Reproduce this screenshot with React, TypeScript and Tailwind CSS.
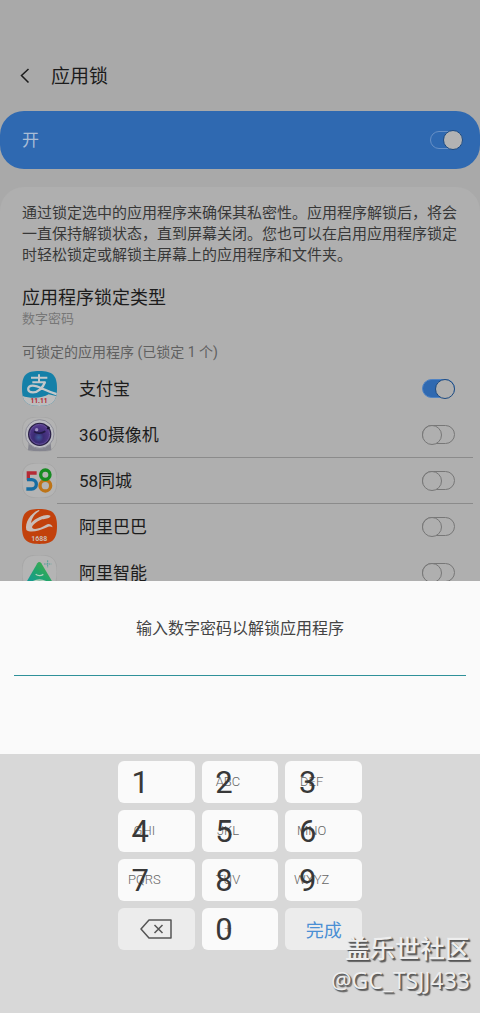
import { useState } from "react";
import type { ReactNode } from "react";

const SQUIRCLE = "M52 0C92 0 105 13 105 52S92 105 52 105 0 92 0 52 12 0 52 0Z";

function AlipayIcon() {
  return (
    <svg viewBox="0 0 105 105" className="size-[35px] shrink-0" aria-hidden="true">
      <clipPath id="alipay">
        <path d={SQUIRCLE} />
      </clipPath>
      <g clipPath="url(#alipay)">
        <rect width="105" height="105" fill="#1580a8" />
        <path d="M0 74C25 84 62 82 80 70L105 76V105H0Z" fill="#bdbdbd" />
        <g fill="none" stroke="#c4c8ca" strokeWidth="6">
          <path d="M27 20H76M51 10V34M31 34H71" />
          <path d="M69 33C63 50 48 64 33 64C14 64 14 44 32 44C50 44 66 58 105 70" strokeWidth="7" />
        </g>
        <text x="51" y="97" textAnchor="middle" fontSize="20" fontWeight="700" fill="#b3212d" fontFamily="Roboto, sans-serif">
          11.11
        </text>
      </g>
    </svg>
  );
}

function CameraIcon() {
  return (
    <svg viewBox="0 0 105 105" className="size-[35px] shrink-0" aria-hidden="true">
      <defs>
        <radialGradient id="lens" cx="45%" cy="65%" r="60%">
          <stop offset="0" stopColor="#3f5c9a" />
          <stop offset="0.4" stopColor="#3b2c74" />
          <stop offset="1" stopColor="#54398c" />
        </radialGradient>
      </defs>
      <path d={SQUIRCLE} fill="#b3b3b3" stroke="#a2a2a2" strokeWidth="2" />
      <path d="M20 78L18 100Q52 106 88 100L86 78Z" fill="#85858f" />
      <circle cx="53" cy="51" r="43" fill="#bcbcc2" stroke="#8d8d98" strokeWidth="3" />
      <circle cx="53" cy="52" r="35" fill="#2a2048" />
      <circle cx="53" cy="52" r="30" fill="url(#lens)" stroke="#66529c" strokeWidth="3" />
      <path d="M36 44Q52 54 70 43" fill="none" stroke="#221a44" strokeWidth="5" />
      <circle cx="44" cy="38" r="5" fill="#9b8fc0" />
      <path d="M76 36L82 30" stroke="#191430" strokeWidth="6" />
    </svg>
  );
}

function CityIcon() {
  return (
    <svg viewBox="0 0 105 105" className="size-[35px] shrink-0" aria-hidden="true">
      <path d={SQUIRCLE} fill="#b4b4b4" stroke="#a2a2a2" strokeWidth="2" />
      <g fill="none" strokeWidth="10">
        <path d="M44 30H19V52" stroke="#b52a35" />
        <path d="M15 50H29A14 14 0 0 1 29 78H13" stroke="#156da3" />
        <circle cx="70" cy="68" r="16" stroke="#bd7417" />
        <circle cx="70" cy="35" r="14" stroke="#168b22" />
      </g>
    </svg>
  );
}

function AlibabaIcon() {
  return (
    <svg viewBox="0 0 105 105" className="size-[35px] shrink-0" aria-hidden="true">
      <path d={SQUIRCLE} fill="#c2410c" />
      <path
        d="M50 3C24 14 8 42 13 63C24 72 51 66 70 57C78 53 85 50 92 55C89 46 80 43 73 47C59 56 38 64 31 57C27 51 43 38 60 31C71 26 82 27 86 21C79 15 65 19 53 24C43 28 34 35 27 42C30 26 38 14 53 5Z"
        fill="#c9bdb8"
      />
      <path d="M48 29C62 20 80 18 84 24C78 30 72 28 65 31Z" fill="#c9bdb8" />
      <text x="52" y="95" textAnchor="middle" fontSize="21" fontWeight="700" fill="#cabbb4" fontFamily="Roboto, sans-serif">
        1688
      </text>
    </svg>
  );
}

function SmartIcon() {
  return (
    <svg viewBox="0 0 105 105" className="size-[35px] shrink-0" aria-hidden="true">
      <defs>
        <linearGradient id="smart" x1="0" y1="1" x2="1" y2="0">
          <stop offset="0" stopColor="#1196a0" />
          <stop offset="0.5" stopColor="#21a56b" />
          <stop offset="1" stopColor="#52ac40" />
        </linearGradient>
      </defs>
      <path d={SQUIRCLE} fill="#b4b4b4" stroke="#a2a2a2" strokeWidth="2" />
      <path d="M46 25Q52 17 58 25L91 80Q94 90 84 90H20Q10 90 14 80Z" fill="url(#smart)" />
      <path d="M41 58Q52 66 64 58M33 80Q52 70 72 80" fill="none" stroke="#b6d0bd" strokeWidth="4" />
      <path d="M77 16V38M66 27H88" stroke="#55a09a" strokeWidth="3" strokeDasharray="5 2" />
    </svg>
  );
}

type LockApp = { name: string; icon: ReactNode; divider?: boolean };

const apps: LockApp[] = [
  { name: "支付宝", icon: <AlipayIcon /> },
  { name: "360摄像机", icon: <CameraIcon /> },
  { name: "58同城", icon: <CityIcon />, divider: true },
  { name: "阿里巴巴", icon: <AlibabaIcon />, divider: true },
  { name: "阿里智能", icon: <SmartIcon /> },
];

const keys = [
  { digit: "1", letters: "" },
  { digit: "2", letters: "ABC" },
  { digit: "3", letters: "DEF" },
  { digit: "4", letters: "GHI" },
  { digit: "5", letters: "JKL" },
  { digit: "6", letters: "MNO" },
  { digit: "7", letters: "PQRS" },
  { digit: "8", letters: "TUV" },
  { digit: "9", letters: "WXYZ" },
];

function DigitKey({ digit, letters, onPress }: { digit: string; letters: string; onPress: (d: string) => void }) {
  return (
    <button
      type="button"
      className="grid h-[42px] place-items-center rounded-md bg-[#fafafa]"
      onClick={() => onPress(digit)}
    >
      <span className="col-start-1 row-start-1 pr-6 text-[13px] font-light text-[#666666]">{letters}</span>
      <span className="col-start-1 row-start-1 pt-px pr-8 text-[31px] leading-10 text-[#383838]">{digit}</span>
    </button>
  );
}

function App() {
  const [enabled, setEnabled] = useState<boolean>(true);
  const [locked, setLocked] = useState<string[]>(["支付宝"]);
  const [code, setCode] = useState<string>("");

  const toggleApp = (name: string) => {
    setLocked(locked.includes(name) ? locked.filter((n) => n !== name) : [...locked, name]);
  };

  const press = (d: string) => {
    setCode(code + d);
  };

  return (
    <div className="relative flex h-screen flex-col overflow-hidden bg-[#a9a9a9] font-[Roboto,'Noto_Sans_CJK_SC',sans-serif] text-[#1c1c1c]">
      <main className="min-h-0 flex-1 overflow-hidden">
        <header className="flex h-24 items-center gap-[18px] pt-14 pl-[18px]">
          <button type="button" aria-label="返回">
            <svg viewBox="0 0 15 16" className="h-4 w-[15px]" fill="none" stroke="#1c1c1c" strokeWidth="1.5">
              <path d="M10.500 1L3.500 7.500L10.500 14.500" />
            </svg>
          </button>
          <h1 className="pt-0.5 text-[19px] leading-7">应用锁</h1>
        </header>

        <label className="mt-[15px] flex h-[58px] items-center justify-between rounded-[24px] bg-[#2f69b1] pr-[17px] pl-[22px] text-[17px] text-[#a9bdd6]">
          <span className="pt-0.5">开</span>
          <input
            type="checkbox"
            checked={enabled}
            onChange={() => setEnabled(!enabled)}
            className="flex h-[18px] w-[33px] appearance-none items-center rounded-full border border-[#6790c6] before:-mx-px before:size-5 before:shrink-0 before:rounded-full before:border before:border-[#1d4a80] before:bg-[#b3b3b3] checked:justify-end"
          />
        </label>

        <section className="mt-[18px] rounded-t-[24px] bg-[#afafaf] pt-4 pb-6">
          <p className="px-[22px] text-[15px] leading-[21px] text-[#383838]">
            通过锁定选中的应用程序来确保其私密性。应用程序解锁后，将会一直保持解锁状态，直到屏幕关闭。您也可以在启用应用程序锁定时轻松锁定或解锁主屏幕上的应用程序和文件夹。
          </p>
          <h2 className="mt-5 px-[22px] text-[18px] leading-6">应用程序锁定类型</h2>
          <p className="px-[22px] text-[13px] leading-[18px] text-[#777777]">数字密码</p>
          <h3 className="mt-[14px] px-[22px] text-[14px] leading-5 text-[#606060]">
            可锁定的应用程序 (已锁定 {locked.length} 个)
          </h3>
          <ul className="mt-[3px] pr-[7px] pl-[22px]">
            {apps.map((app) => (
              <li key={app.name}>
                <label className="flex h-[46px] items-center">
                  {app.icon}
                  <span
                    className={
                      app.divider
                        ? "flex h-full flex-1 items-center justify-between border-t border-[#8b8b8b] pr-[18px] pl-[22px] text-[17px]"
                        : "flex h-full flex-1 items-center justify-between border-t border-transparent pr-[18px] pl-[22px] text-[17px]"
                    }
                  >
                    <span className="pt-0.5">{app.name}</span>
                    <input
                      type="checkbox"
                      checked={locked.includes(app.name)}
                      onChange={() => toggleApp(app.name)}
                      className="flex h-[19px] w-[33px] appearance-none items-center rounded-full border border-[#777777] before:-mx-px before:size-5 before:shrink-0 before:rounded-full before:border before:border-[#777777] before:bg-[#afafaf] checked:justify-end checked:border-[#4f83c4] checked:bg-[#2f69b1] checked:before:border-[#1d4a80]"
                    />
                  </span>
                </label>
              </li>
            ))}
          </ul>
        </section>
      </main>

      <section className="bg-[#fafafa] px-[14px] pt-9 pb-[78px]">
        <label htmlFor="code" className="block text-center text-[16px] leading-6 text-[#444444]">
          输入数字密码以解锁应用程序
        </label>
        <input
          id="code"
          type="password"
          value={code}
          onChange={(e) => setCode(e.target.value)}
          className="block h-[35px] w-full border-b border-[#2f9199] text-center text-[19px] outline-none"
        />
      </section>

      <section className="bg-[#d8d8d8] pt-[7px] pb-[63px]">
        <div className="mx-auto grid w-[244px] grid-cols-3 gap-[7px]">
          {keys.map((k) => (
            <DigitKey key={k.digit} digit={k.digit} letters={k.letters} onPress={press} />
          ))}
          <button
            type="button"
            aria-label="删除"
            className="flex h-[42px] items-center justify-center rounded-md bg-[#ececec]"
            onClick={() => setCode(code.slice(0, -1))}
          >
            <svg viewBox="0 0 32 20" className="h-5 w-8" fill="none" stroke="#555555" strokeWidth="1.500">
              <path d="M9 1H31V19H9L1 10Z" strokeLinejoin="round" />
              <path d="M14.500 6L22.500 14M22.500 6L14.500 14" />
            </svg>
          </button>
          <DigitKey digit="0" letters="+" onPress={press} />
          <button type="button" className="h-[42px] rounded-md bg-[#ececec] pt-0.5 text-[18px] text-[#4a8fd4]">
            完成
          </button>
        </div>
      </section>

      <div className="pointer-events-none absolute right-[10px] bottom-[17px] text-right font-['Open_Sans','Noto_Sans_CJK_SC',sans-serif] text-[#eeeeee] [text-shadow:1px_1px_1px_#555555,2px_2px_1px_#666666]">
        <p className="text-[25px] leading-8 font-medium">盖乐世社区</p>
        <p className="text-[23px] leading-8">@GC_TSJJ433</p>
      </div>
    </div>
  );
}

export default App;
